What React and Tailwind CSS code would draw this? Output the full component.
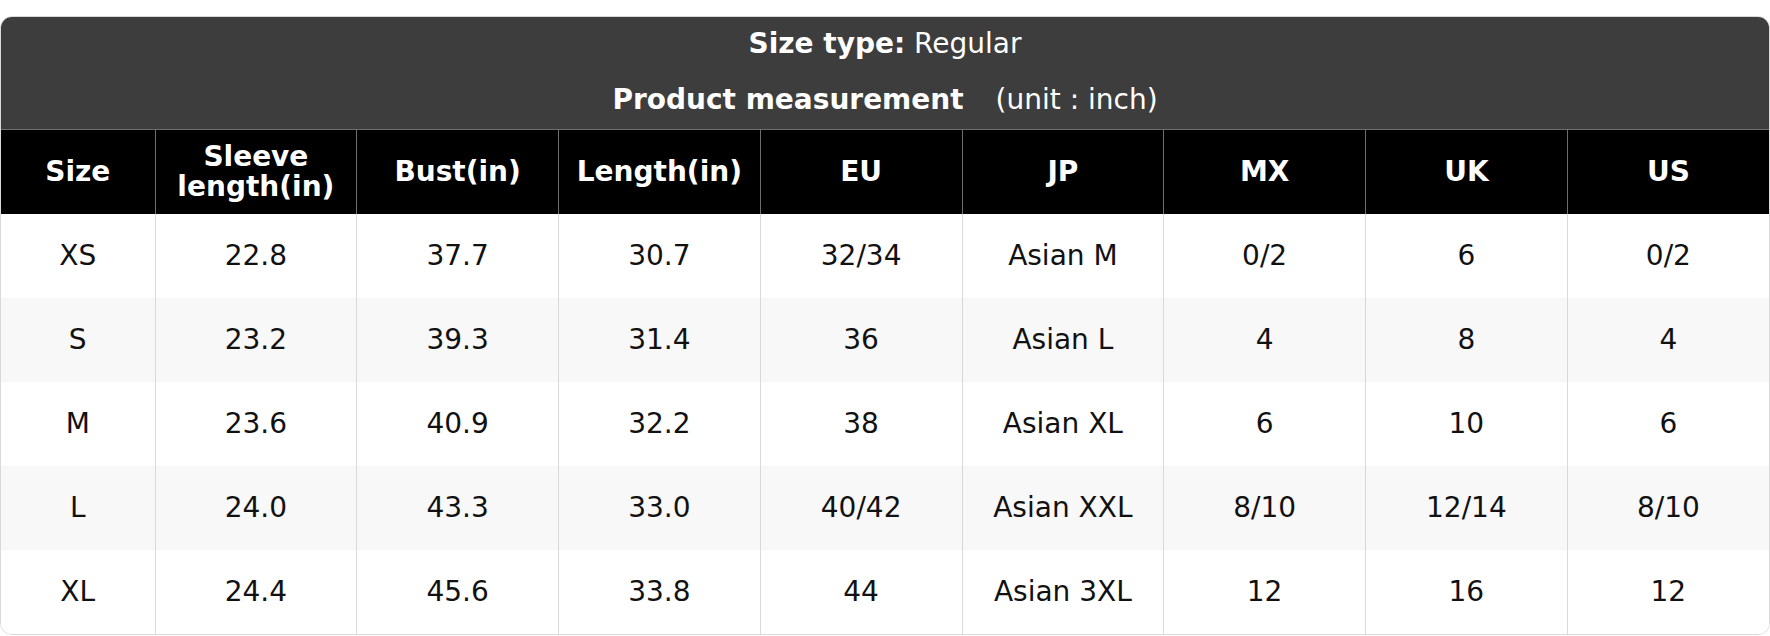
import React from 'react';

const headers = ['Size', 'Sleeve length(in)', 'Bust(in)', 'Length(in)', 'EU', 'JP', 'MX', 'UK', 'US'];

const rows = [
    ['XS', '22.8', '37.7', '30.7', '32/34', 'Asian M', '0/2', '6', '0/2'],
    ['S', '23.2', '39.3', '31.4', '36', 'Asian L', '4', '8', '4'],
    ['M', '23.6', '40.9', '32.2', '38', 'Asian XL', '6', '10', '6'],
    ['L', '24.0', '43.3', '33.0', '40/42', 'Asian XXL', '8/10', '12/14', '8/10'],
    ['XL', '24.4', '45.6', '33.8', '44', 'Asian 3XL', '12', '16', '12'],
];

const App = () => {
    return (
        <div className="w-[1770px] h-[636px] bg-white pt-[16px] font-['DejaVu_Sans',sans-serif]">
            <div className="rounded-[12px] border border-[#d9d9d9] overflow-hidden">
                {/* Title block */}
                <div className="bg-[#3d3d3d] text-white text-center text-[28px] leading-[32px] pt-[11px] pb-[13px]">
                    <p>
                        <span className="font-bold">Size type:</span> Regular
                    </p>
                    <p className="mt-[24px]">
                        <span className="font-bold">Product measurement</span>
                        <span className="ml-[32px]">(unit : inch)</span>
                    </p>
                </div>

                <table className="w-full table-fixed border-collapse text-center text-[28px]">
                    <colgroup>
                        <col className="w-[154px]" />
                        {headers.slice(1).map((h) => (
                            <col key={h} />
                        ))}
                    </colgroup>
                    <thead>
                        <tr className="bg-black text-white h-[84px]">
                            {headers.map((h, i) => (
                                <th
                                    key={h}
                                    className={`font-bold leading-[30px] px-2 border-t border-[#6e6e6e] ${i > 0 ? 'border-l' : ''}`}
                                >
                                    {h === 'Sleeve length(in)' ? (
                                        <>
                                            Sleeve
                                            <br />
                                            length(in)
                                        </>
                                    ) : (
                                        h
                                    )}
                                </th>
                            ))}
                        </tr>
                    </thead>
                    <tbody className="text-[#111]">
                        {rows.map((r, ri) => (
                            <tr key={r[0]} className={`h-[84px] ${ri % 2 === 1 ? 'bg-[#f8f8f8]' : 'bg-white'}`}>
                                {r.map((c, ci) => (
                                    <td key={ci} className={`${ci > 0 ? 'border-l border-[#d9d9d9]' : ''}`}>
                                        {c}
                                    </td>
                                ))}
                            </tr>
                        ))}
                    </tbody>
                </table>
            </div>
        </div>
    );
};

export default App;
